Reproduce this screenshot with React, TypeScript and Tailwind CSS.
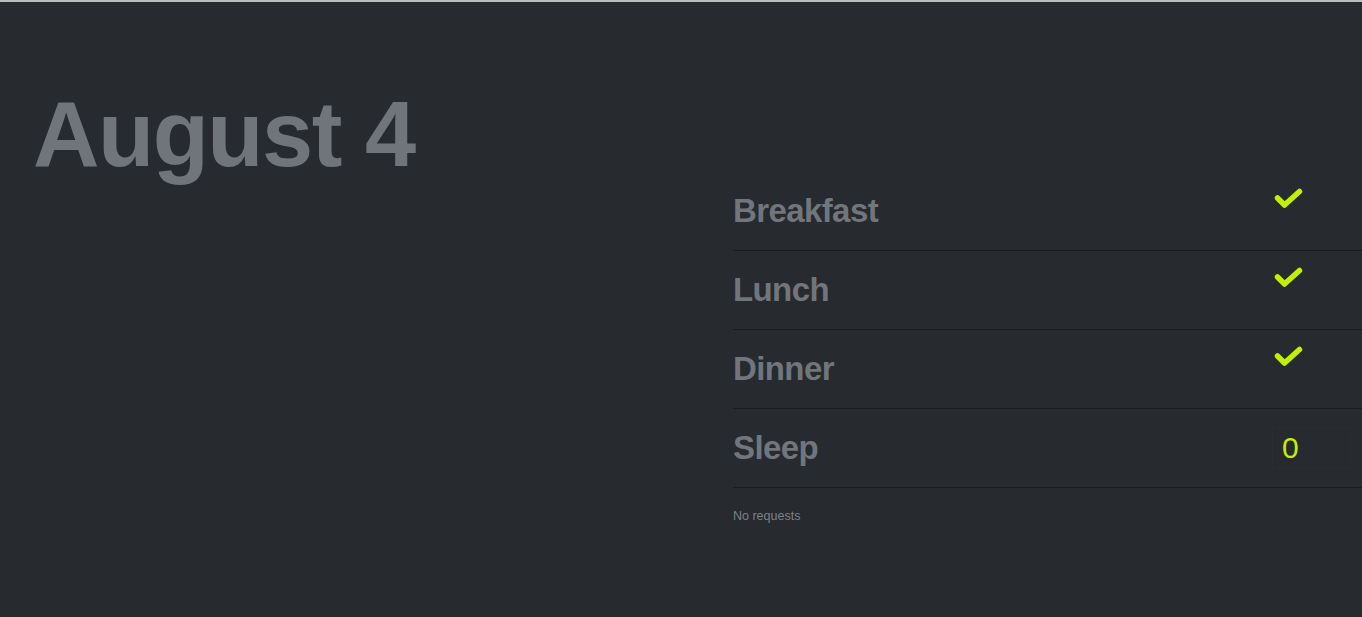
import React from "react";

const meals = [
  { label: "Breakfast", done: true },
  { label: "Lunch", done: true },
  { label: "Dinner", done: true },
];

function Check() {
  return (
    <svg width="29" height="21" viewBox="0 0 29 21" className="block">
      <polyline
        points="3.5,10 10.5,17 25.5,3.5"
        fill="none"
        stroke="#c3ef00"
        strokeWidth={5.5}
        strokeLinecap="round"
        strokeLinejoin="round"
      />
    </svg>
  );
}

function Row({ label, children, checkRow }: { label: string; children: React.ReactNode; checkRow?: boolean }) {
  return (
    <div className="flex h-[79px] items-center border-b border-[#1b1d21]">
      <div className="flex-1 text-[33px] font-bold tracking-[-0.6px] text-[#71767c]">{label}</div>
      <div className={`mr-[11px] w-[79px] ${checkRow ? "self-start pt-[16px]" : ""}`}>{children}</div>
    </div>
  );
}

export default function App() {
  return (
    <main
      className="flex min-h-[617px] border-t-2 border-[#bdbdbd] bg-[#272a2f]"
      style={{ fontFamily: '"Liberation Sans", Arial, sans-serif' }}
    >
      <section className="w-[733px] shrink-0 pl-[33px] pt-[86px]">
        <h1 className="text-[92px] font-bold leading-none tracking-[-1.5px] text-[#6f757b]">August 4</h1>
      </section>

      <section className="flex-1 pt-[170px]">
        {meals.map((m) => (
          <Row key={m.label} label={m.label} checkRow>
            <div className="pl-[2px]">
              <Check />
            </div>
          </Row>
        ))}
        <Row label="Sleep">
          <div className="flex h-[42px] items-center border border-[#2a2d32] pl-[9px] text-[30px] leading-none text-[#c3ef00]">
            0
          </div>
        </Row>
        <p className="mt-[19px] text-[12.5px] text-[#7c8187]">No requests</p>
      </section>
    </main>
  );
}
